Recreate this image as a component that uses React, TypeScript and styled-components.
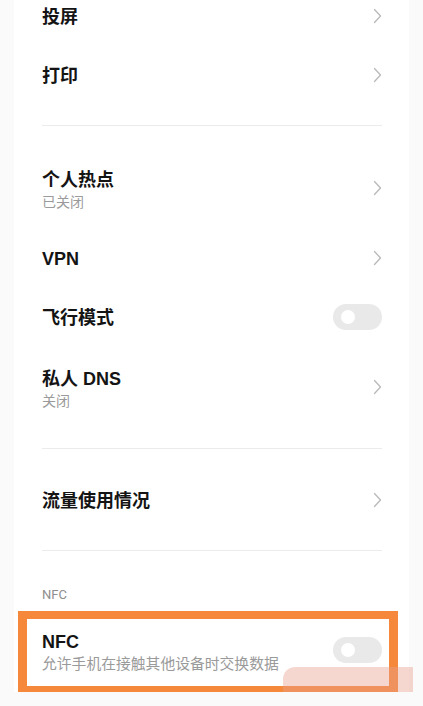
import React from "react";
import styled, { createGlobalStyle } from "styled-components";

const GlobalStyle = createGlobalStyle`
  html, body {
    margin: 0;
    padding: 0;
    background: #fafafa;
    overflow: hidden;
  }
  body {
    font-family: "Noto Sans CJK SC", "Noto Sans", Roboto, sans-serif;
  }
`;

type Item = {
  title: string;
  sub?: string;
  kind: "link" | "toggle";
};

const sections: Item[][] = [
  [
    { title: "投屏", kind: "link" },
    { title: "打印", kind: "link" },
  ],
  [
    { title: "个人热点", sub: "已关闭", kind: "link" },
    { title: "VPN", kind: "link" },
    { title: "飞行模式", kind: "toggle" },
    { title: "私人 DNS", sub: "关闭", kind: "link" },
  ],
  [{ title: "流量使用情况", kind: "link" }],
];

function Chevron() {
  return (
    <svg width="9" height="16" viewBox="0 0 9 16">
      <polyline
        points="1.5,1.5 7.5,8 1.5,14.5"
        fill="none"
        stroke="#b9b9b9"
        strokeWidth="1.3"
        strokeLinecap="round"
        strokeLinejoin="round"
      />
    </svg>
  );
}

function Row({ item }: { item: Item }) {
  return (
    <RowBox $tall={!!item.sub}>
      <TextCol>
        <Title>{item.title}</Title>
        {item.sub && <Sub>{item.sub}</Sub>}
      </TextCol>
      {item.kind === "link" ? (
        <ChevronWrap>
          <Chevron />
        </ChevronWrap>
      ) : (
        <Switch>
          <Knob />
        </Switch>
      )}
    </RowBox>
  );
}

export default function App() {
  return (
    <>
      <GlobalStyle />
      <Page>
        {sections.map((rows, i) => (
          <Section key={i} $first={i === 0}>
            {rows.map((r) => (
              <Row key={r.title} item={r} />
            ))}
          </Section>
        ))}
        <GroupHeader>NFC</GroupHeader>
        <Highlight>
          <NfcRow>
            <TextCol>
              <Title>NFC</Title>
              <Sub $large>允许手机在接触其他设备时交换数据</Sub>
            </TextCol>
            <Switch>
              <Knob />
            </Switch>
          </NfcRow>
        </Highlight>
        <Smudge />
      </Page>
    </>
  );
}

const Page = styled.div`
  position: relative;
  margin: 0 14px;
  height: 706px;
  background: #ffffff;
  padding: 0 27px 0 28px;
  box-sizing: border-box;
`;

const Section = styled.div<{ $first?: boolean }>`
  margin-top: ${(p) => (p.$first ? "-14px" : "0")};
  padding: ${(p) => (p.$first ? "0" : "21px")} 0 21px;
  border-bottom: 1px solid #ebebeb;
`;

const RowBox = styled.div<{ $tall?: boolean }>`
  display: flex;
  align-items: center;
  justify-content: space-between;
  height: ${(p) => (p.$tall ? "81px" : "59px")};
`;

const TextCol = styled.div`
  display: flex;
  flex-direction: column;
`;

const Title = styled.div`
  font-family: "Liberation Sans", "Noto Sans CJK SC", sans-serif;
  font-size: 18px;
  line-height: 22px;
  padding-top: 3px;
  font-weight: 600;
  color: #141414;
`;

const Sub = styled.div<{ $large?: boolean }>`
  margin-top: 1px;
  font-size: ${(p) => (p.$large ? "14.8px" : "14px")};
  line-height: 18px;
  color: #9a9a9a;
`;

const ChevronWrap = styled.div`
  display: flex;
  align-items: center;
`;

const Switch = styled.div`
  width: 49px;
  height: 26px;
  border-radius: 13px;
  background: #e9e9e9;
  display: flex;
  align-items: center;
  padding-left: 8px;
  box-sizing: border-box;
  flex-shrink: 0;
`;

const Knob = styled.div`
  width: 14px;
  height: 14px;
  border-radius: 50%;
  background: #ffffff;
`;

const GroupHeader = styled.div`
  padding-top: 36px;
  font-size: 13px;
  line-height: 16px;
  color: #8e8e8e;
  font-family: Roboto, "Noto Sans", sans-serif;
`;

const Highlight = styled.div`
  margin: 8px -16px 0 -24px;
  border: 9px solid #f5883b;
  border-top-width: 8px;
  border-bottom-width: 8px;
  background: #ffffff;
`;

const NfcRow = styled.div`
  display: flex;
  align-items: center;
  justify-content: space-between;
  padding: 9px 7px 14px 15px;
`;

const Smudge = styled.div`
  position: absolute;
  left: 269px;
  top: 681px;
  width: 130px;
  height: 25px;
  border-radius: 12px 0 0 0;
  background: rgba(232, 160, 140, 0.42);
  pointer-events: none;
`;
